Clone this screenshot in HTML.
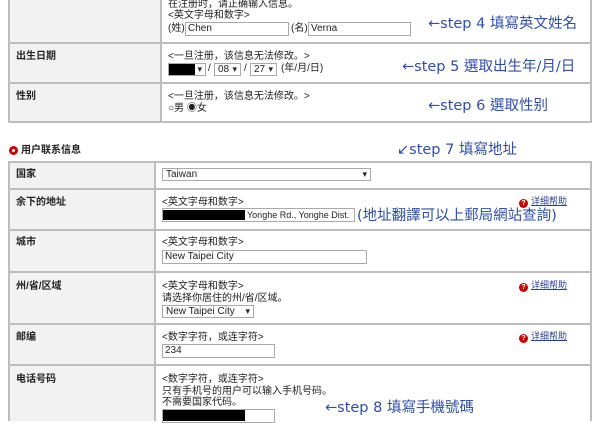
<!DOCTYPE html>
<html><head><meta charset="utf-8"><style>
*{margin:0;padding:0;box-sizing:border-box}
body{width:600px;height:421px;overflow:hidden;background:#fff;font-family:"Liberation Sans","Noto Sans CJK SC",sans-serif;font-size:10px;line-height:12px;color:#222;position:relative}
.a{position:absolute;white-space:nowrap;line-height:12px;height:12px}
.lab{position:absolute;background:#f2f2f2}
.hl{position:absolute;height:2px;background:#bdbdbd}
.vl{position:absolute;width:2px;background:#bdbdbd}
.b{font-weight:bold}
.in{position:absolute;border:1px solid #aaa;background:#fff;height:14px;font-size:10px;padding-left:2px;line-height:12px}
.sel{position:absolute;border:1px solid #aaa;background:#fff;height:13px;font-size:10px;padding-left:3px;line-height:11px}
.sel:after{content:"▾";position:absolute;right:3px;top:0;font-size:9px}
.note{position:absolute;white-space:nowrap;color:#2f4fa8;font-family:"DejaVu Sans","Noto Sans CJK TC",sans-serif;font-size:14.5px;line-height:18px}
.help{position:absolute;color:#2a3f9a;text-decoration:underline;font-size:9px;white-space:nowrap;line-height:11px}
.help i{display:inline-block;width:9px;height:9px;border-radius:50%;background:#c00;color:#fff;font-style:normal;font-size:7px;text-align:center;line-height:9px;margin-right:3px;font-weight:bold;text-decoration:none;vertical-align:-1px}
</style></head><body>
<div class="lab" style="left:8px;top:0;width:153px;height:122px"></div>
<div class="vl" style="left:8px;top:0;height:123px"></div>
<div class="vl" style="left:160px;top:0;height:123px"></div>
<div class="vl" style="left:590px;top:0;height:123px"></div>
<div class="hl" style="left:8px;top:42px;width:584px"></div>
<div class="hl" style="left:8px;top:82px;width:584px"></div>
<div class="hl" style="left:8px;top:121px;width:584px"></div>

<div class="a" style="left:168px;top:-1px">在注册时，请正确输入信息。</div>
<div class="a" style="left:168px;top:10px">&lt;英文字母和数字&gt;</div>
<div class="a" style="left:168px;top:23px">(姓)</div>
<div class="in" style="left:185px;top:22px;width:104px">Chen</div>
<div class="a" style="left:291px;top:23px">(名)</div>
<div class="in" style="left:308px;top:22px;width:103px">Verna</div>
<div class="note" style="left:428px;top:15px">←step 4 填寫英文姓名</div>

<div class="a b" style="left:16px;top:51px">出生日期</div>
<div class="a" style="left:168px;top:51px">&lt;一旦注册，该信息无法修改。&gt;</div>
<div style="position:absolute;left:168px;top:64px;width:27px;height:11px;background:#000"></div>
<div class="sel" style="left:168px;top:63px;width:38px;background:transparent"></div>
<div class="a" style="left:208px;top:63px">/</div>
<div class="sel" style="left:214px;top:63px;width:27px">08</div>
<div class="a" style="left:244px;top:63px">/</div>
<div class="sel" style="left:250px;top:63px;width:27px">27</div>
<div class="a" style="left:281px;top:63px">(年/月/日)</div>
<div class="note" style="left:402px;top:58px">←step 5 選取出生年/月/日</div>

<div class="a b" style="left:16px;top:91px">性别</div>
<div class="a" style="left:168px;top:91px">&lt;一旦注册，该信息无法修改。&gt;</div>
<div class="a" style="left:168px;top:103px">○男 ◉女</div>
<div class="note" style="left:428px;top:97px">←step 6 選取性别</div>

<div style="position:absolute;left:9px;top:146px;width:9px;height:9px;border-radius:50%;border:3px solid #c00"></div>
<div class="a b" style="left:21px;top:145px">用户联系信息</div>
<div class="note" style="left:397px;top:141px">↙step 7 填寫地址</div>

<div class="lab" style="left:8px;top:162px;width:147px;height:259px"></div>
<div class="vl" style="left:8px;top:162px;height:259px"></div>
<div class="vl" style="left:154px;top:162px;height:259px"></div>
<div class="vl" style="left:590px;top:162px;height:259px"></div>
<div class="hl" style="left:8px;top:161px;width:584px"></div>
<div class="hl" style="left:8px;top:188px;width:584px"></div>
<div class="hl" style="left:8px;top:229px;width:584px"></div>
<div class="hl" style="left:8px;top:271px;width:584px"></div>
<div class="hl" style="left:8px;top:323px;width:584px"></div>
<div class="hl" style="left:8px;top:364px;width:584px"></div>

<div class="a b" style="left:16px;top:169px">国家</div>
<div class="sel" style="left:162px;top:168px;width:209px">Taiwan</div>

<div class="a b" style="left:16px;top:197px">余下的地址</div>
<div class="a" style="left:162px;top:197px">&lt;英文字母和数字&gt;</div>
<div class="in" style="left:162px;top:208px;width:193px;font-size:9px;padding-left:84px">Yonghe Rd., Yonghe Dist.</div>
<div style="position:absolute;left:163px;top:210px;width:82px;height:10px;background:#000"></div>
<div class="note" style="left:357px;top:207px">(地址翻譯可以上郵局網站查詢)</div>
<div class="help" style="left:519px;top:196px"><i>?</i>详细帮助</div>

<div class="a b" style="left:16px;top:237px">城市</div>
<div class="a" style="left:162px;top:237px">&lt;英文字母和数字&gt;</div>
<div class="in" style="left:162px;top:250px;width:205px">New Taipei City</div>

<div class="a b" style="left:16px;top:281px">州/省/区域</div>
<div class="a" style="left:162px;top:281px">&lt;英文字母和数字&gt;</div>
<div class="a" style="left:162px;top:293px">请选择你居住的州/省/区域。</div>
<div class="sel" style="left:162px;top:305px;width:92px">New Taipei City</div>
<div class="help" style="left:519px;top:280px"><i>?</i>详细帮助</div>

<div class="a b" style="left:16px;top:332px">邮编</div>
<div class="a" style="left:162px;top:332px">&lt;数字字符，或连字符&gt;</div>
<div class="in" style="left:162px;top:344px;width:113px">234</div>
<div class="help" style="left:519px;top:331px"><i>?</i>详细帮助</div>

<div class="a b" style="left:16px;top:374px">电话号码</div>
<div class="a" style="left:162px;top:374px">&lt;数字字符，或连字符&gt;</div>
<div class="a" style="left:162px;top:386px">只有手机号的用户可以输入手机号码。</div>
<div class="a" style="left:162px;top:397px">不需要国家代码。</div>
<div class="in" style="left:162px;top:409px;width:113px"></div>
<div style="position:absolute;left:163px;top:410px;width:82px;height:11px;background:#000"></div>
<div class="note" style="left:325px;top:399px">←step 8 填寫手機號碼</div>
</body></html>
